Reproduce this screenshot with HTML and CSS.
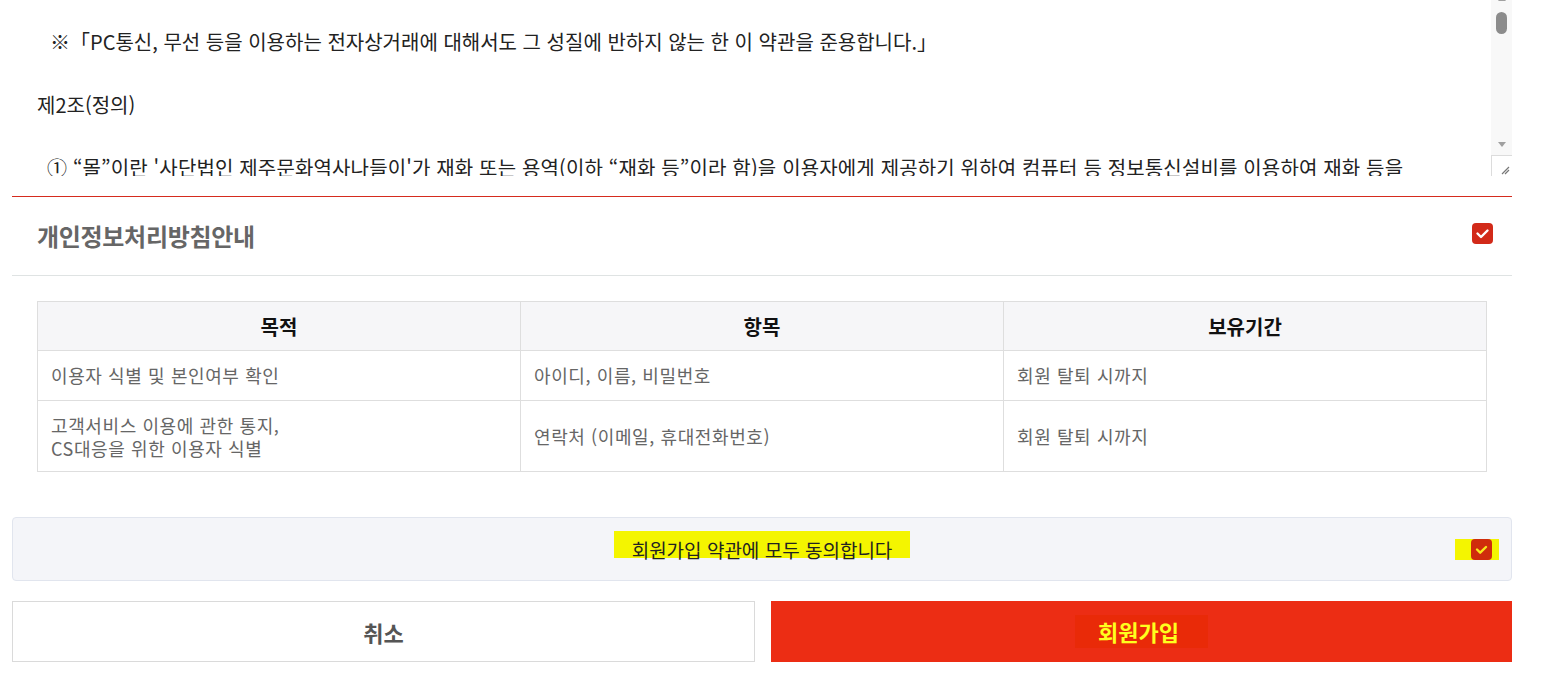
FILE: index.html
```html
<!DOCTYPE html>
<html lang="ko">
<head>
<meta charset="utf-8">
<title>회원가입</title>
<link rel="stylesheet" href="styles.css">
</head>
<body>
<div class="page">
  <div class="terms">
    <div class="terms-text">
      <p class="indent-lg">※「PC통신, 무선 등을 이용하는 전자상거래에 대해서도 그 성질에 반하지 않는 한 이 약관을 준용합니다.」</p>
      <p>제2조(정의)</p>
      <p class="indent-sm">① “몰”이란 '사단법인 제주문화역사나들이'가 재화 또는 용역(이하 “재화 등”이라 함)을 이용자에게 제공하기 위하여 컴퓨터 등 정보통신설비를 이용하여 재화 등을</p>
    </div>
    <div class="scrollbar">
      <span class="arrow-up"></span>
      <span class="thumb"></span>
      <span class="track"></span>
      <span class="arrow-down"></span>
      <span class="corner">
        <svg width="10" height="10" viewBox="0 0 10 10"><path d="M2 9 L9 2 M5 9 L9 5" stroke="#777" stroke-width="1.2" fill="none"/></svg>
      </span>
    </div>
  </div>

  <section class="privacy">
    <div class="privacy-head">
      <h2 class="privacy-title">개인정보처리방침안내</h2>
      <span class="check">
        <svg width="21" height="21" viewBox="0 0 21 21"><polyline points="5.5,10.5 9,14 15.5,7.5" fill="none" stroke="#fff" stroke-width="2.4" stroke-linecap="round" stroke-linejoin="round"/></svg>
      </span>
    </div>
    <div class="table-wrap">
      <table class="info-table">
        <thead>
          <tr><th>목적</th><th>항목</th><th>보유기간</th></tr>
        </thead>
        <tbody>
          <tr class="row-1"><td>이용자 식별 및 본인여부 확인</td><td>아이디, 이름, 비밀번호</td><td>회원 탈퇴 시까지</td></tr>
          <tr class="row-2"><td>고객서비스 이용에 관한 통지,<br>CS대응을 위한 이용자 식별</td><td>연락처 (이메일, 휴대전화번호)</td><td>회원 탈퇴 시까지</td></tr>
        </tbody>
      </table>
    </div>
  </section>

  <div class="agree-all">
    <span class="agree-text"><span class="mark">회원가입 약관에 모두 동의합니다</span></span>
    <span class="check-mark">
      <span class="check check-alt">
        <svg width="21" height="21" viewBox="0 0 21 21"><polyline points="6,10.5 9.2,13.7 15,8" fill="none" stroke="#f7e81c" stroke-width="2.4" stroke-linecap="round" stroke-linejoin="round"/></svg>
      </span>
    </span>
  </div>

  <div class="actions">
    <button class="btn btn-cancel">취소</button>
    <button class="btn btn-join"><span class="join-mark">회원가입</span></button>
  </div>
</div>
</body>
</html>
```

FILE: styles.css
```css
* { box-sizing: border-box; }

html, body {
  margin: 0;
  padding: 0;
  background: #fff;
}

body {
  font-family: "Noto Sans CJK KR", "Noto Sans", sans-serif;
  color: #333;
}

.page {
  width: 1500px;
  margin-left: 12px;
}

/* ---------- terms textarea ---------- */
.terms {
  display: flex;
  height: 176px;
  overflow: hidden;
  background: #fff;
}

.terms-text {
  flex: 1;
  padding: 26px 0 0 25px;
  font-size: 20px;
  line-height: 32px;
  color: #222;
  white-space: nowrap;
  overflow: hidden;
}

.terms-text p {
  margin: 0 0 31px;
}

.terms-text .indent-lg { padding-left: 13px; }
.terms-text .indent-sm { padding-left: 10px; letter-spacing: 0.15px; }

.scrollbar {
  width: 21px;
  flex: none;
  display: flex;
  flex-direction: column;
  align-items: center;
  background: #f8f8f8;
}

.arrow-up {
  margin-top: -4px;
  width: 0;
  height: 0;
  border-left: 4px solid transparent;
  border-right: 4px solid transparent;
  border-bottom: 5px solid #a0a0a0;
}

.thumb {
  margin-top: 11px;
  width: 11px;
  height: 22px;
  border-radius: 6px;
  background: #8c8c8c;
}

.track { flex: 1; }

.arrow-down {
  width: 0;
  height: 0;
  border-left: 4px solid transparent;
  border-right: 4px solid transparent;
  border-top: 5px solid #a0a0a0;
  margin-bottom: 8px;
}

.corner {
  width: 21px;
  height: 21px;
  background: #fff;
  border-left: 1px solid #dcdcdc;
  border-top: 1px solid #dcdcdc;
  display: flex;
  align-items: flex-end;
  justify-content: flex-end;
  padding: 0 2px 1px 0;
}

/* ---------- privacy section ---------- */
.privacy {
  margin-top: 20px;
  border-top: 1px solid #d52b1e;
}

.privacy-head {
  display: flex;
  align-items: center;
  justify-content: space-between;
  height: 79px;
  padding: 0 19px 0 25px;
  border-bottom: 1px solid #dfe3e3;
}

.privacy-title {
  margin: 0 0 2px;
  font-size: 24px;
  font-weight: 700;
  color: #666;
  letter-spacing: -0.3px;
}

.check {
  width: 21px;
  height: 21px;
  border-radius: 4px;
  background: #d22a19;
  display: flex;
  align-items: center;
  justify-content: center;
  margin-top: -6px;
}

.table-wrap {
  padding: 25px 25px 0;
}

.info-table {
  width: 100%;
  border-collapse: collapse;
  table-layout: fixed;
  font-size: 18px;
}

.info-table th,
.info-table td {
  border: 1px solid #dedede;
}

.info-table th {
  height: 49px;
  background: #f6f6f8;
  color: #111;
  font-weight: 700;
  font-size: 20px;
  text-align: center;
  padding-top: 1px;
}

.info-table td {
  color: #666;
  padding: 0 13px;
  line-height: 23px;
  letter-spacing: 0.6px;
}

.row-1 td { height: 50px; }
.row-2 td { height: 71px; padding-top: 1px; }

/* ---------- agree all ---------- */
.agree-all {
  margin-top: 45px;
  height: 64px;
  border: 1px solid #e1e5ee;
  border-radius: 4px;
  background: #f4f5f9;
  display: flex;
  align-items: center;
}

.agree-text {
  flex: 1;
  text-align: center;
  font-size: 19px;
  color: #222;
  padding-left: 56px;
}

.mark {
  display: inline-block;
  padding: 5px 18px 0;
  line-height: 27px;
  background: linear-gradient(#f4f500, #f4f500) no-repeat 0 0 / 100% 27px;
  margin-bottom: 4px;
}

.check-mark {
  display: flex;
  background: #f4f500;
  padding: 0 7px 0 16px;
  margin-right: 12px;
  margin-top: 1px;
}

.check-alt {
  background: #cf2c0c;
  margin-top: 0;
}

/* ---------- buttons ---------- */
.actions {
  margin-top: 20px;
  display: flex;
  gap: 16px;
}

.btn {
  flex: 1;
  height: 61px;
  font-family: inherit;
  font-size: 22px;
  font-weight: 700;
  cursor: pointer;
  padding: 0;
}

.btn-cancel {
  background: #fff;
  border: 1px solid #dadada;
  color: #555;
}

.btn-join {
  background: #ec2d14;
  border: none;
  color: #ffff1e;
}

.join-mark {
  display: inline-block;
  background: #e92a08;
  padding: 2px 29px 2px 23px;
  line-height: 29px;
}
```
